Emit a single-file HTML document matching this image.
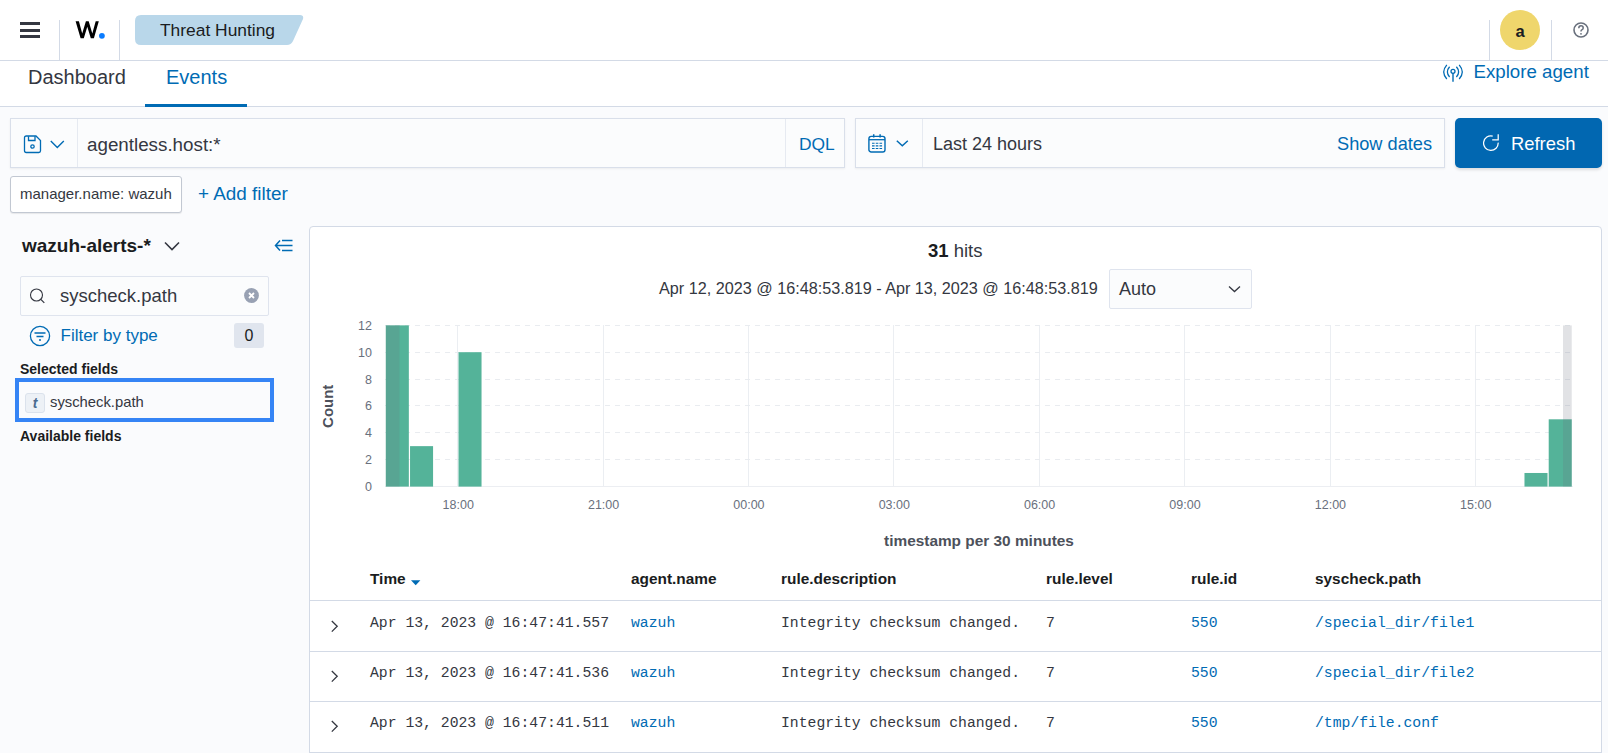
<!DOCTYPE html>
<html><head><meta charset="utf-8">
<style>
*{box-sizing:border-box;margin:0;padding:0}
html,body{width:1608px;height:753px;overflow:hidden}
body{font-family:"Liberation Sans",sans-serif;background:#fafbfd;color:#343741;position:relative}
.a{position:absolute;white-space:nowrap}
.mono{font-family:"Liberation Mono",monospace}
#hdr{position:absolute;left:0;top:0;width:1608px;height:61px;background:#fff;border-bottom:1px solid #d3dae6}
#tabs{position:absolute;left:0;top:61px;width:1608px;height:46px;background:#fff;border-bottom:1px solid #d3dae6}
.vsep{position:absolute;top:20px;width:1px;height:40px;background:#d3dae6}
.box{position:absolute;border:1px solid #d9dfea;background:#fbfcfd}
.lnk{color:#006bb4}
</style></head><body>
<div id="hdr">
  <div class="a" style="left:20px;top:22px;width:20px;height:3px;background:#343741"></div>
  <div class="a" style="left:20px;top:28.5px;width:20px;height:3px;background:#343741"></div>
  <div class="a" style="left:20px;top:35px;width:20px;height:3px;background:#343741"></div>
  <div class="vsep" style="left:59px"></div>
  <svg class="a" style="left:0;top:0" width="120" height="60" viewBox="0 0 120 60"><path d="M75.6 21.2 H78.9 L82.2 33.6 L85.9 21.2 H88.7 L92.3 33.6 L95.7 21.2 H98.8 L93.9 38.2 H90.8 L87.3 26.8 L83.8 38.2 H80.6 Z" fill="#000"/><circle cx="101.9" cy="35.8" r="2.9" fill="#0a7cff"/></svg>
  
  <div class="vsep" style="left:119px"></div>
  <svg class="a" style="left:135px;top:15px" width="169" height="30" viewBox="0 0 169 30"><path d="M6 0 H165 Q169 0 168 4 L158 26 Q156 30 152 30 H6 Q0 30 0 24 V6 Q0 0 6 0 Z" fill="#b9d7ea"/></svg>
  <div class="a" style="left:160px;top:20.4px;font-size:17.4px;color:#1a1c21">Threat Hunting</div>
  <div class="vsep" style="left:1489px"></div>
  <div class="a" style="left:1500px;top:10px;width:40px;height:40px;border-radius:50%;background:#efd66c"></div>
  <div class="a" style="left:1500px;top:22px;width:40px;text-align:center;font-size:16.5px;font-weight:bold;color:#1a1c21">a</div>
  <div class="vsep" style="left:1551px"></div>
  <svg class="a" style="left:1573px;top:22px" width="16" height="16" viewBox="0 0 16 16"><circle cx="8" cy="8" r="7" fill="none" stroke="#69707d" stroke-width="1.6"/><path d="M5.8 6.2 Q5.8 3.8 8 3.8 Q10.2 3.8 10.2 5.9 Q10.2 7.2 8.8 7.9 Q8 8.3 8 9.4" fill="none" stroke="#69707d" stroke-width="1.5"/><circle cx="8" cy="11.8" r="0.9" fill="#69707d"/></svg>
</div>
<div id="tabs">
  <div class="a" style="left:28px;top:5px;font-size:20px;color:#343741">Dashboard</div>
  <div class="a lnk" style="left:166px;top:5px;font-size:20px">Events</div>
  <div class="a" style="left:145px;top:43px;width:102px;height:3px;background:#006bb4"></div>
  <svg class="a" style="left:1443px;top:3px" width="20" height="18" viewBox="0 0 20 18"><path d="M3.8 0.8 Q0.7 4.5 0.7 8 Q0.7 11.5 3.8 15 M6.6 2.8 Q4.4 5.3 4.4 8 Q4.4 10.7 6.6 13 M16.2 0.8 Q19.3 4.5 19.3 8 Q19.3 11.5 16.2 15 M13.4 2.8 Q15.6 5.3 15.6 8 Q15.6 10.7 13.4 13" fill="none" stroke="#006bb4" stroke-width="1.3"/><circle cx="10" cy="7.3" r="2" fill="none" stroke="#006bb4" stroke-width="1.3"/><path d="M10 9.3 V17.8" stroke="#006bb4" stroke-width="1.4"/></svg>
  <div class="a lnk" style="left:1473.5px;top:0px;font-size:18.7px">Explore agent</div>
</div>

<!-- query bar -->
<div class="box" style="left:10px;top:118px;width:835px;height:50px;box-shadow:0 1px 2px rgba(0,0,0,.06)">
  <div class="a" style="left:66px;top:0;width:1px;height:48px;background:#e6eaf1"></div>
  <svg class="a" style="left:11.5px;top:16px" width="19" height="19" viewBox="0 0 19 19"><path d="M2.8 1 H13 L17.5 5.5 V15.8 Q17.5 17.5 15.8 17.5 H3.2 Q1.5 17.5 1.5 15.8 V2.7 Q1.5 1 3.2 1 Z" fill="none" stroke="#006bb4" stroke-width="1.3"/><path d="M5.5 1.2 V5.5 H12 V1.2" fill="none" stroke="#006bb4" stroke-width="1.3"/><circle cx="9.5" cy="11.5" r="1.7" fill="none" stroke="#006bb4" stroke-width="1.3"/></svg>
  <svg class="a" style="left:39px;top:21px" width="16" height="9" viewBox="0 0 16 9"><path d="M0.8 1 L7.3 7.5 L13.8 1" fill="none" stroke="#006bb4" stroke-width="1.4"/></svg>
  <div class="a" style="left:76px;top:15px;font-size:18.8px;color:#343741">agentless.host:*</div>
  <div class="a" style="left:774px;top:0;width:1px;height:48px;background:#e6eaf1"></div>
  <div class="a lnk" style="left:788px;top:15px;font-size:17.4px">DQL</div>
</div>
<div class="box" style="left:855px;top:118px;width:590px;height:50px;box-shadow:0 1px 2px rgba(0,0,0,.06)">
  <div class="a" style="left:66px;top:0;width:1px;height:48px;background:#e6eaf1"></div>
  <svg class="a" style="left:12px;top:15px" width="19" height="20" viewBox="0 0 19 20"><rect x="0.9" y="2.4" width="16.1" height="15.6" rx="2.3" fill="none" stroke="#006bb4" stroke-width="1.4"/><path d="M1 5.7 H17" stroke="#006bb4" stroke-width="1.3"/><path d="M5.7 0.2 V3.6 M12.1 0.2 V3.6" stroke="#006bb4" stroke-width="1.5"/><path d="M4 9.3 H14.2 M4 11.9 H14.2 M4 14.5 H14.2" stroke="#006bb4" stroke-width="1.1" stroke-dasharray="2.6 1.15"/></svg>
  <svg class="a" style="left:40px;top:21px" width="14" height="8" viewBox="0 0 14 8"><path d="M0.8 0.8 L6.3 5.7 L11.8 0.8" fill="none" stroke="#006bb4" stroke-width="1.5"/></svg>
  <div class="a" style="left:77px;top:15px;font-size:18px;color:#343741">Last 24 hours</div>
  <div class="a lnk" style="left:481px;top:15px;font-size:18.2px">Show dates</div>
</div>
<div class="a" style="left:1455px;top:118px;width:147px;height:50px;background:#0167b1;border-radius:5px;box-shadow:0 2px 3px rgba(0,0,0,.12)">
  <svg class="a" style="left:28px;top:16px" width="18" height="18" viewBox="0 0 18 18"><path d="M9.7 2.05 A7.3 7.3 0 1 0 15.15 8.6" fill="none" stroke="#fff" stroke-width="1.25"/><path d="M15.2 0.3 V5.9 H9.2" fill="none" stroke="#fff" stroke-width="1.25"/></svg>
  <div class="a" style="left:56px;top:14.5px;font-size:18.4px;color:#fff">Refresh</div>
</div>
<!-- filter pill -->
<div class="a" style="left:10px;top:176px;width:172px;height:36.5px;background:#fff;border:1px solid #c2c8d2;border-radius:3px;box-shadow:0 1px 1px rgba(0,0,0,.08)">
  <div class="a" style="left:9px;top:8px;font-size:15px;color:#343741">manager.name: wazuh</div>
</div>
<div class="a lnk" style="left:198px;top:183px;font-size:18.9px">+ Add filter</div>

<!-- sidebar -->
<div class="a" style="left:22px;top:235px;font-size:19px;font-weight:bold;color:#1a1c21">wazuh-alerts-*</div>
<svg class="a" style="left:164px;top:241px" width="16" height="10" viewBox="0 0 16 10"><path d="M1 1.5 L8 8.5 L15 1.5" fill="none" stroke="#343741" stroke-width="1.6"/></svg>
<svg class="a" style="left:274px;top:239px" width="20" height="14" viewBox="0 0 20 14"><path d="M6 1.5 L1.5 6.5 L6 11.5 M1.5 6.5 H18.5 M8 1.5 H18.5 M8 11.5 H18.5" fill="none" stroke="#006bb4" stroke-width="1.5"/></svg>
<div class="a" style="left:20px;top:276px;width:249px;height:40px;background:#fbfcfd;border:1px solid #dfe4ee;border-radius:2px"></div>
<svg class="a" style="left:29px;top:288px" width="17" height="16" viewBox="0 0 17 16"><circle cx="7.5" cy="7" r="6" fill="none" stroke="#343741" stroke-width="1.1"/><path d="M11.8 11.3 L15.3 14.8" stroke="#343741" stroke-width="1.2"/></svg>
<div class="a" style="left:60px;top:285px;font-size:18.5px;color:#343741">syscheck.path</div>
<svg class="a" style="left:244px;top:288px" width="15" height="15" viewBox="0 0 15 15"><circle cx="7.5" cy="7.5" r="7.4" fill="#98a1b3"/><path d="M5 5 L10 10 M10 5 L5 10" stroke="#fff" stroke-width="1.8"/></svg>
<svg class="a" style="left:29px;top:325px" width="22" height="22" viewBox="0 0 22 22"><circle cx="11" cy="11" r="9.6" fill="none" stroke="#006bb4" stroke-width="1.3"/><path d="M5.5 8 H16.5 M7.5 11.5 H14.5 M10 15 H12" stroke="#006bb4" stroke-width="1.4"/></svg>
<div class="a lnk" style="left:60.5px;top:325.5px;font-size:17px">Filter by type</div>
<div class="a" style="left:234px;top:323px;width:30px;height:25px;background:#e0e5ee;border-radius:3px;font-size:16px;color:#1a1c21;text-align:center;line-height:25px">0</div>
<div class="a" style="left:20px;top:361px;font-size:14px;font-weight:bold;color:#1a1c21">Selected fields</div>
<div class="a" style="left:15px;top:378px;width:259px;height:44px;border:4px solid #3584f5"></div>
<div class="a" style="left:25px;top:393px;width:20px;height:20px;background:#edf1f6;border:1px solid #dbe2ec;border-radius:3px;font-family:'Liberation Sans',sans-serif;font-style:italic;font-weight:bold;font-size:14px;color:#4a6b90;text-align:center;line-height:18px">t</div>
<div class="a" style="left:50px;top:394px;font-size:14.8px;color:#343741">syscheck.path</div>
<div class="a" style="left:20px;top:428px;font-size:14px;font-weight:bold;color:#1a1c21">Available fields</div>
<!-- main panel -->
<div class="a" style="left:309px;top:226px;width:1293px;height:540px;background:#fff;border:1px solid #d3dae6;border-radius:4px"></div>

<div class="a" style="left:928px;top:240px;font-size:18.5px;color:#343741"><b style="color:#1a1c21">31</b> hits</div>
<div class="a" style="left:659px;top:279px;font-size:16.2px;color:#343741">Apr 12, 2023 @ 16:48:53.819 - Apr 13, 2023 @ 16:48:53.819</div>
<div class="a" style="left:1109px;top:269px;width:143px;height:40px;background:#fbfcfd;border:1px solid #dfe4ee;border-radius:2px"></div>
<div class="a" style="left:1119px;top:279px;font-size:18px;color:#343741">Auto</div>
<svg class="a" style="left:1228px;top:285px" width="13" height="8" viewBox="0 0 13 8"><path d="M1 1.5 L6.5 6.5 L12 1.5" fill="none" stroke="#343741" stroke-width="1.3"/></svg>
<svg class="a" style="left:0;top:0" width="1608" height="753" viewBox="0 0 1608 753">
<line x1="457.5" y1="325" x2="457.5" y2="486" stroke="#ebeef2" stroke-width="1"/>
<line x1="603.5" y1="325" x2="603.5" y2="486" stroke="#ebeef2" stroke-width="1"/>
<line x1="748.5" y1="325" x2="748.5" y2="486" stroke="#ebeef2" stroke-width="1"/>
<line x1="893.5" y1="325" x2="893.5" y2="486" stroke="#ebeef2" stroke-width="1"/>
<line x1="1039.5" y1="325" x2="1039.5" y2="486" stroke="#ebeef2" stroke-width="1"/>
<line x1="1184.5" y1="325" x2="1184.5" y2="486" stroke="#ebeef2" stroke-width="1"/>
<line x1="1330.5" y1="325" x2="1330.5" y2="486" stroke="#ebeef2" stroke-width="1"/>
<line x1="1475.5" y1="325" x2="1475.5" y2="486" stroke="#ebeef2" stroke-width="1"/>
<line x1="385" y1="459.5" x2="1573" y2="459.5" stroke="#e9ecf0" stroke-width="1" stroke-dasharray="5 5"/>
<line x1="385" y1="432.5" x2="1573" y2="432.5" stroke="#e9ecf0" stroke-width="1" stroke-dasharray="5 5"/>
<line x1="385" y1="405.5" x2="1573" y2="405.5" stroke="#e9ecf0" stroke-width="1" stroke-dasharray="5 5"/>
<line x1="385" y1="379.5" x2="1573" y2="379.5" stroke="#e9ecf0" stroke-width="1" stroke-dasharray="5 5"/>
<line x1="385" y1="352.5" x2="1573" y2="352.5" stroke="#e9ecf0" stroke-width="1" stroke-dasharray="5 5"/>
<line x1="385" y1="325.5" x2="1573" y2="325.5" stroke="#e9ecf0" stroke-width="1" stroke-dasharray="5 5"/>
<line x1="385" y1="486.5" x2="1573" y2="486.5" stroke="#eceef2" stroke-width="1"/>
<rect x="385.81" y="325.36" width="23.03" height="161.24" fill="#54b399"/>
<rect x="410.04" y="446.14" width="23.03" height="40.46" fill="#54b399"/>
<rect x="458.50" y="352.20" width="23.03" height="134.40" fill="#54b399"/>
<rect x="1524.48" y="472.98" width="23.03" height="13.62" fill="#54b399"/>
<rect x="1548.71" y="419.30" width="23.03" height="67.30" fill="#54b399"/>
<rect x="385.81" y="325.4" width="13.69" height="161.2" fill="#69707d" fill-opacity="0.2"/>
<rect x="1563" y="325.4" width="8.74" height="161.2" fill="#69707d" fill-opacity="0.2"/>
<text x="372" y="490.9" text-anchor="end" font-family="Liberation Sans" font-size="12.5" fill="#69707d">0</text>
<text x="372" y="464.1" text-anchor="end" font-family="Liberation Sans" font-size="12.5" fill="#69707d">2</text>
<text x="372" y="437.2" text-anchor="end" font-family="Liberation Sans" font-size="12.5" fill="#69707d">4</text>
<text x="372" y="410.4" text-anchor="end" font-family="Liberation Sans" font-size="12.5" fill="#69707d">6</text>
<text x="372" y="383.5" text-anchor="end" font-family="Liberation Sans" font-size="12.5" fill="#69707d">8</text>
<text x="372" y="356.7" text-anchor="end" font-family="Liberation Sans" font-size="12.5" fill="#69707d">10</text>
<text x="372" y="329.9" text-anchor="end" font-family="Liberation Sans" font-size="12.5" fill="#69707d">12</text>
<text x="458.2" y="508.6" text-anchor="middle" font-family="Liberation Sans" font-size="12.5" fill="#69707d">18:00</text>
<text x="603.6" y="508.6" text-anchor="middle" font-family="Liberation Sans" font-size="12.5" fill="#69707d">21:00</text>
<text x="748.9" y="508.6" text-anchor="middle" font-family="Liberation Sans" font-size="12.5" fill="#69707d">00:00</text>
<text x="894.3" y="508.6" text-anchor="middle" font-family="Liberation Sans" font-size="12.5" fill="#69707d">03:00</text>
<text x="1039.6" y="508.6" text-anchor="middle" font-family="Liberation Sans" font-size="12.5" fill="#69707d">06:00</text>
<text x="1185.0" y="508.6" text-anchor="middle" font-family="Liberation Sans" font-size="12.5" fill="#69707d">09:00</text>
<text x="1330.4" y="508.6" text-anchor="middle" font-family="Liberation Sans" font-size="12.5" fill="#69707d">12:00</text>
<text x="1475.7" y="508.6" text-anchor="middle" font-family="Liberation Sans" font-size="12.5" fill="#69707d">15:00</text>
<text transform="translate(332.5 406.3) rotate(-90)" text-anchor="middle" font-family="Liberation Sans" font-weight="bold" font-size="15" fill="#4d515b">Count</text>
<text x="979" y="546.4" text-anchor="middle" font-family="Liberation Sans" font-weight="bold" font-size="15.4" fill="#4d515b">timestamp per 30 minutes</text>
</svg>
<!-- table -->
<div class="a" style="left:370px;top:570px;font-size:15.4px;font-weight:bold;color:#1a1c21">Time</div>
<svg class="a" style="left:411px;top:579.5px" width="10" height="6" viewBox="0 0 10 6"><path d="M0 0.3 H9.4 L4.7 5.2 Z" fill="#006bb4"/></svg>
<div class="a" style="left:631px;top:570px;font-size:15.4px;font-weight:bold;color:#1a1c21">agent.name</div>
<div class="a" style="left:781px;top:570px;font-size:15.4px;font-weight:bold;color:#1a1c21">rule.description</div>
<div class="a" style="left:1046px;top:570px;font-size:15.4px;font-weight:bold;color:#1a1c21">rule.level</div>
<div class="a" style="left:1191px;top:570px;font-size:15.4px;font-weight:bold;color:#1a1c21">rule.id</div>
<div class="a" style="left:1315px;top:570px;font-size:15.4px;font-weight:bold;color:#1a1c21">syscheck.path</div>
<div class="a" style="left:310px;top:600px;width:1291px;height:1px;background:#d3dae6"></div>
<div class="a" style="left:310px;top:651px;width:1291px;height:1px;background:#d3dae6"></div>
<div class="a" style="left:310px;top:701px;width:1291px;height:1px;background:#d3dae6"></div>
<div class="a" style="left:310px;top:752px;width:1291px;height:1px;background:#d3dae6"></div>
<svg class="a" style="left:331px;top:620px" width="8" height="13" viewBox="0 0 8 13"><path d="M0.8 1 L6.2 6.3 L0.8 11.6" fill="none" stroke="#343741" stroke-width="1.3"/></svg>
<div class="a mono" style="left:370px;top:615px;font-size:14.75px;color:#343741">Apr 13, 2023 @ 16:47:41.557</div>
<div class="a mono lnk" style="left:631px;top:615px;font-size:14.75px">wazuh</div>
<div class="a mono" style="left:781px;top:615px;font-size:14.75px;color:#343741">Integrity checksum changed.</div>
<div class="a mono" style="left:1046px;top:615px;font-size:14.75px;color:#343741">7</div>
<div class="a mono lnk" style="left:1191px;top:615px;font-size:14.75px">550</div>
<div class="a mono lnk" style="left:1315px;top:615px;font-size:14.75px">/special_dir/file1</div>
<svg class="a" style="left:331px;top:670px" width="8" height="13" viewBox="0 0 8 13"><path d="M0.8 1 L6.2 6.3 L0.8 11.6" fill="none" stroke="#343741" stroke-width="1.3"/></svg>
<div class="a mono" style="left:370px;top:665px;font-size:14.75px;color:#343741">Apr 13, 2023 @ 16:47:41.536</div>
<div class="a mono lnk" style="left:631px;top:665px;font-size:14.75px">wazuh</div>
<div class="a mono" style="left:781px;top:665px;font-size:14.75px;color:#343741">Integrity checksum changed.</div>
<div class="a mono" style="left:1046px;top:665px;font-size:14.75px;color:#343741">7</div>
<div class="a mono lnk" style="left:1191px;top:665px;font-size:14.75px">550</div>
<div class="a mono lnk" style="left:1315px;top:665px;font-size:14.75px">/special_dir/file2</div>
<svg class="a" style="left:331px;top:720px" width="8" height="13" viewBox="0 0 8 13"><path d="M0.8 1 L6.2 6.3 L0.8 11.6" fill="none" stroke="#343741" stroke-width="1.3"/></svg>
<div class="a mono" style="left:370px;top:715px;font-size:14.75px;color:#343741">Apr 13, 2023 @ 16:47:41.511</div>
<div class="a mono lnk" style="left:631px;top:715px;font-size:14.75px">wazuh</div>
<div class="a mono" style="left:781px;top:715px;font-size:14.75px;color:#343741">Integrity checksum changed.</div>
<div class="a mono" style="left:1046px;top:715px;font-size:14.75px;color:#343741">7</div>
<div class="a mono lnk" style="left:1191px;top:715px;font-size:14.75px">550</div>
<div class="a mono lnk" style="left:1315px;top:715px;font-size:14.75px">/tmp/file.conf</div>
</body></html>
